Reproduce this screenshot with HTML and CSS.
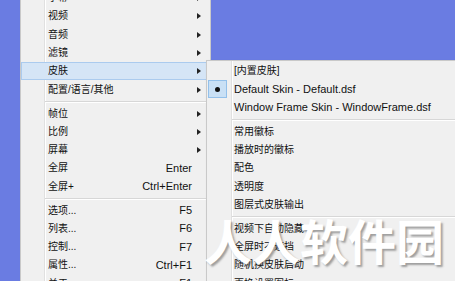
FILE: index.html
```html
<!DOCTYPE html>
<html lang="zh-CN">
<head>
<meta charset="utf-8">
<title>菜单</title>
<link rel="stylesheet" href="styles.css">
</head>
<body>
<div class="stage">
  <div class="menu main">
    <div class="item"><span class="label">字幕</span><span class="key"></span><span class="sub-arrow"><i></i></span></div>
    <div class="item"><span class="label">视频</span><span class="key"></span><span class="sub-arrow"><i></i></span></div>
    <div class="item"><span class="label">音频</span><span class="key"></span><span class="sub-arrow"><i></i></span></div>
    <div class="item"><span class="label">滤镜</span><span class="key"></span><span class="sub-arrow"><i></i></span></div>
    <div class="item active"><span class="label">皮肤</span><span class="key"></span><span class="sub-arrow"><i></i></span></div>
    <div class="item"><span class="label">配置/语言/其他</span><span class="key"></span><span class="sub-arrow"><i></i></span></div>
    <div class="sep"></div>
    <div class="item"><span class="label">帧位</span><span class="key"></span><span class="sub-arrow"><i></i></span></div>
    <div class="item"><span class="label">比例</span><span class="key"></span><span class="sub-arrow"><i></i></span></div>
    <div class="item"><span class="label">屏幕</span><span class="key"></span><span class="sub-arrow"><i></i></span></div>
    <div class="item"><span class="label">全屏</span><span class="key">Enter</span><span class="sub-arrow"></span></div>
    <div class="item"><span class="label">全屏+</span><span class="key">Ctrl+Enter</span><span class="sub-arrow"></span></div>
    <div class="sep"></div>
    <div class="item"><span class="label">选项...</span><span class="key">F5</span><span class="sub-arrow"></span></div>
    <div class="item"><span class="label">列表...</span><span class="key">F6</span><span class="sub-arrow"></span></div>
    <div class="item"><span class="label">控制...</span><span class="key">F7</span><span class="sub-arrow"></span></div>
    <div class="item"><span class="label">属性...</span><span class="key">Ctrl+F1</span><span class="sub-arrow"></span></div>
    <div class="item"><span class="label">关于...</span><span class="key">F1</span><span class="sub-arrow"></span></div>
  </div>

  <div class="menu submenu">
    <div class="item"><span class="check"></span><span class="label">[内置皮肤]</span></div>
    <div class="item"><span class="check on"><b></b></span><span class="label en">Default Skin - Default.dsf</span></div>
    <div class="item"><span class="check"></span><span class="label en">Window Frame Skin - WindowFrame.dsf</span></div>
    <div class="sep"></div>
    <div class="item"><span class="check"></span><span class="label">常用徽标</span></div>
    <div class="item"><span class="check"></span><span class="label">播放时的徽标</span></div>
    <div class="item"><span class="check"></span><span class="label">配色</span></div>
    <div class="item"><span class="check"></span><span class="label">透明度</span></div>
    <div class="item"><span class="check"></span><span class="label">图层式皮肤输出</span></div>
    <div class="sep"></div>
    <div class="item"><span class="check"></span><span class="label">视频下自动隐藏</span></div>
    <div class="item"><span class="check"></span><span class="label">全屏时不遮挡</span></div>
    <div class="item"><span class="check"></span><span class="label">随机换皮肤启动</span></div>
    <div class="item"><span class="check"></span><span class="label">更换设置图标</span></div>
  </div>

  <div class="watermark">人人软件园</div>
</div>
</body>
</html>
```

FILE: styles.css
```css
html, body {
  margin: 0;
  padding: 0;
}

body {
  background: #6a7ce2;
  width: 455px;
  height: 281px;
  overflow: hidden;
  font-family: "Liberation Sans", "Noto Sans CJK SC", sans-serif;
  font-size: 10px;
  color: #111;
}

.stage {
  position: relative;
  display: flex;
  align-items: flex-start;
  padding-left: 20px;
  height: 281px;
  overflow: hidden;
}

.menu {
  box-sizing: border-box;
  background-color: #f0f0f0;
  border: 1px solid #c9c9c9;
  padding: 2px 0;
  flex: none;
}

.main {
  width: 191px;
  margin-top: -14px;
  background-image: linear-gradient(to right,
    transparent 23px, #e0e0e0 23px, #e0e0e0 24px,
    #ffffff 24px, #ffffff 25px, transparent 25px);
}

.submenu {
  position: relative;
  z-index: 1;
  width: 262px;
  margin-top: 60px;
  margin-left: -5px;
  padding-top: 1px;
  background-image: linear-gradient(to right,
    transparent 24px, #e0e0e0 24px, #e0e0e0 25px,
    #ffffff 25px, #ffffff 26px, transparent 26px);
  box-shadow: 1px 1px 2px rgba(0, 0, 0, 0.15);
}

.item {
  box-sizing: border-box;
  display: flex;
  align-items: center;
  height: 18.3px;
  border: 1px solid transparent;
  white-space: nowrap;
}

.main .item {
  padding-left: 26px;
}

.item.active {
  background: #d5e5f6;
  border-color: #abcbee;
}

.label {
  flex: 1;
  line-height: 1;
}

.en {
  font-size: 11px;
}

.key {
  font-size: 11px;
  text-align: right;
  line-height: 1;
}

.sub-arrow {
  width: 17px;
  flex: none;
  display: flex;
  align-items: center;
  padding-left: 5px;
  box-sizing: border-box;
}

.sub-arrow i {
  display: block;
  width: 0;
  height: 0;
  border-left: 4px solid #222;
  border-top: 3px solid transparent;
  border-bottom: 3px solid transparent;
}

.sep {
  height: 5.6px;
  display: flex;
  flex-direction: column;
  justify-content: center;
}

.sep::before {
  content: "";
  display: block;
  height: 1px;
  background: #d7d7d7;
  border-bottom: 1px solid #ffffff;
}

.main .sep::before {
  margin-left: 24px;
  margin-right: 2px;
}

.submenu .sep::before {
  margin-left: 25px;
}

.check {
  box-sizing: border-box;
  flex: none;
  width: 19px;
  height: 18px;
  margin-right: 7px;
  display: flex;
  align-items: center;
  justify-content: center;
  border: 1px solid transparent;
}

.check.on {
  background: #c9e0f5;
  border-color: #93c0ea;
}

.check b {
  display: block;
  width: 5px;
  height: 5px;
  border-radius: 50%;
  background: #111;
}

.watermark {
  position: absolute;
  z-index: 2;
  left: 204px;
  top: 211px;
  font-family: "Noto Sans CJK SC", sans-serif;
  font-weight: 700;
  font-size: 48px;
  line-height: 1.2;
  color: #ffffff;
  white-space: nowrap;
  text-shadow: 2px 2px 2px rgba(60, 60, 60, 0.45);
}
```
